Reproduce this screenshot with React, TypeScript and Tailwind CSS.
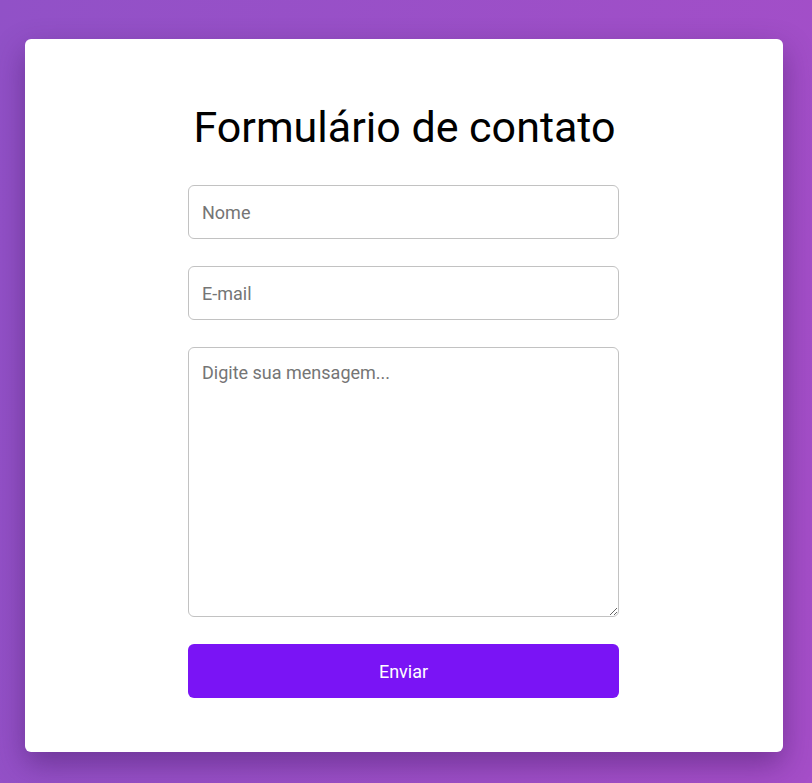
export default function App() {
  return (
    <div
      className="min-h-[783px] w-full pt-[39px] pl-[25px] bg-[linear-gradient(100deg,#9151c7_0%,#a54ec8_100%)]"
      style={{ fontFamily: "Roboto, 'Noto Sans', sans-serif" }}
    >
      <div className="w-[758px] h-[713px] bg-white rounded-[6px] shadow-[0_12px_30px_rgba(60,20,90,0.45)] flex flex-col pt-[60px]">
        <h1 className="text-[43px] leading-[56px] text-black font-normal text-center pl-[1px]">Formulário de contato</h1>
        <form className="w-[431px] ml-[163px] flex flex-col mt-[30px]" onSubmit={(e) => e.preventDefault()}>
          <input
            type="text"
            placeholder="Nome"
            className="h-[54px] w-full border border-[#c2c2c2] rounded-[6px] px-[13px] text-[18px] text-black placeholder:text-[#757575] outline-none"
          />
          <input
            type="email"
            placeholder="E-mail"
            className="mt-[27px] h-[54px] w-full border border-[#c2c2c2] rounded-[6px] px-[13px] text-[18px] text-black placeholder:text-[#757575] outline-none"
          />
          <textarea
            placeholder="Digite sua mensagem..."
            className="mt-[27px] h-[270px] w-full border border-[#c2c2c2] rounded-[6px] px-[13px] pt-[13px] text-[18px] leading-[24px] text-black placeholder:text-[#757575] outline-none resize-y"
          />
          <button
            type="submit"
            className="mt-[27px] h-[54px] w-full rounded-[6px] bg-[#7a14f5] text-white text-[18px]"
          >
            Enviar
          </button>
        </form>
      </div>
    </div>
  );
}
